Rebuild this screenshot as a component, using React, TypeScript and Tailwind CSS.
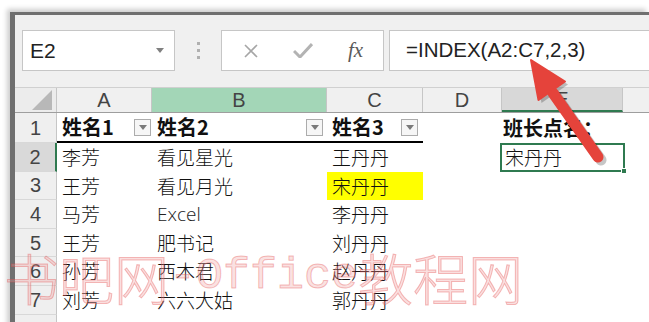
import React from 'react';

const cjk = "font-['Noto_Sans_CJK_SC',sans-serif]";
const latin = "font-['Liberation_Sans','Noto_Sans_CJK_SC',sans-serif]";

interface RowData {
  n: number;
  a: string;
  b: string;
  c: string;
  e?: string;
}

const rows: RowData[] = [
  { n: 2, a: '李芳', b: '看见星光', c: '王丹丹', e: '宋丹丹' },
  { n: 3, a: '王芳', b: '看见月光', c: '宋丹丹' },
  { n: 4, a: '马芳', b: 'Excel', c: '李丹丹' },
  { n: 5, a: '王芳', b: '肥书记', c: '刘丹丹' },
  { n: 6, a: '孙芳', b: '西木君', c: '赵丹丹' },
  { n: 7, a: '刘芳', b: '六六大姑', c: '郭丹丹' },
];

const FilterButton = () => (
  <div className="w-[17px] h-[17px] border border-[#acacac] bg-[#f6f6f6] flex items-center justify-center">
    <svg width="8" height="5" viewBox="0 0 8 5">
      <path d="M0 0 L8 0 L4 5 Z" fill="#7a7a7a" />
    </svg>
  </div>
);

export default function App() {
  return (
    <div className="relative w-[649px] h-[322px] overflow-hidden bg-white">
      <div className="pt-[12px] pl-[10px]">
        {/* Window */}
        <div className="border-t-[3px] border-l-[5px] border-[#6f6f6f] shadow-[-3px_-3px_5px_rgba(0,0,0,0.2)]">
          {/* Formula bar */}
          <div className="h-[72px] bg-[#f0f0f0] flex items-start pt-[15px]">
            <div className="ml-[7px] w-[153px] h-[41px] bg-white border border-[#c6c6c6] flex items-center justify-between pl-[7px] pr-[10px]">
              <span className={`${latin} text-[21px] text-[#222]`}>E2</span>
              <svg width="8" height="5" viewBox="0 0 8 5">
                <path d="M0 0 L8 0 L4 5 Z" fill="#808080" />
              </svg>
            </div>
            <div className="w-[46px] h-[41px] flex items-center justify-center">
              <div className="h-[17px] border-l-[3px] border-dotted border-[#b0b0b0]" />
            </div>
            <div className="w-[163px] h-[41px] bg-white border border-[#c6c6c6] flex items-center">
              <svg className="ml-[22px]" width="14" height="14" viewBox="0 0 14 14">
                <path d="M1 1 L13 13 M13 1 L1 13" stroke="#a6a6a6" strokeWidth="1.6" fill="none" />
              </svg>
              <svg className="ml-[35px]" width="20" height="15" viewBox="0 0 20 15">
                <path d="M1 8 L7 14 L19 1" stroke="#b3b3b3" strokeWidth="3" fill="none" />
              </svg>
              <span className="ml-[35px] font-['Liberation_Serif',serif] italic text-[21px] text-[#5a5a5a]">fx</span>
            </div>
            <div className="ml-[5px] flex-1 h-[41px] bg-white border border-[#c6c6c6] border-r-0 flex items-center pl-[16px]">
              <span className={`${latin} text-[20.5px] text-[#222] whitespace-nowrap`}>=INDEX(A2:C7,2,3)</span>
            </div>
          </div>

          {/* Column headers */}
          <div className={`flex h-[26px] border-t border-[#d0d0d0] border-b border-b-[#9e9e9e] ${latin} text-[20px] text-[#444]`}>
            <div className="w-[42px] bg-[#ececec] border-r border-[#c6c6c6] flex items-end justify-end pr-[4px] pb-[2px]">
              <svg width="20" height="20" viewBox="0 0 20 20">
                <path d="M20 0 L20 20 L0 20 Z" fill="#b8b8b8" />
              </svg>
            </div>
            <div className="w-[95px] bg-[#f0f0f0] border-r border-[#c6c6c6] flex items-center justify-center">A</div>
            <div className="w-[175px] bg-[#a3d6b7] border-r border-[#c6c6c6] flex items-center justify-center">B</div>
            <div className="w-[96px] bg-[#f0f0f0] border-r border-[#c6c6c6] flex items-center justify-center">C</div>
            <div className="w-[79px] bg-[#f0f0f0] border-r border-[#c6c6c6] flex items-center justify-center">D</div>
            <div className="w-[121px] bg-[#d8d8d8] border-r border-[#c6c6c6] border-b-2 border-b-[#2f7a50] flex items-center justify-center">E</div>
            <div className="flex-1 bg-[#f0f0f0]" />
          </div>

          {/* Row 1 */}
          <div className="flex h-[30px]">
            <div className={`w-[42px] bg-[#efefef] border-r border-[#c6c6c6] border-b border-b-[#d8d8d8] flex items-center justify-center ${latin} text-[20px] text-[#444]`}>1</div>
            <div className="w-[366px] flex border-b-2 border-black">
              <div className={`w-[95px] flex items-center justify-between pl-[5px] pr-[1px] ${cjk} font-bold text-[20px] text-[#111]`}>
                <span>姓名1</span>
                <FilterButton />
              </div>
              <div className={`w-[175px] flex items-center justify-between pl-[5px] pr-[4px] ${cjk} font-bold text-[20px] text-[#111]`}>
                <span>姓名2</span>
                <FilterButton />
              </div>
              <div className={`w-[96px] flex items-center justify-between pl-[5px] pr-[5px] ${cjk} font-bold text-[20px] text-[#111]`}>
                <span>姓名3</span>
                <FilterButton />
              </div>
            </div>
            <div className="w-[79px]" />
            <div className={`w-[121px] flex items-center pl-[1px] ${cjk} font-bold text-[20px] text-[#111]`}>班长点名：</div>
          </div>

          {/* Data rows */}
          {rows.map((r) => (
            <div key={r.n} className="flex h-[28.6px]">
              <div
                className={`w-[42px] border-r border-b border-b-[#d8d8d8] flex items-center justify-center ${latin} text-[20px] text-[#444] ${
                  r.n === 2 ? 'bg-[#d9d9d9] border-r-2 border-r-[#2f7a50]' : 'bg-[#efefef] border-r-[#c6c6c6]'
                }`}
              >
                {r.n}
              </div>
              <div className={`w-[95px] flex items-center pl-[5px] ${cjk} font-light text-[19px] text-[#111]`}>{r.a}</div>
              <div className={`w-[175px] flex items-center pl-[5px] ${r.b === 'Excel' ? "font-['Open_Sans',sans-serif] text-[19px] text-[#222]" : cjk + ' text-[19px] text-[#111]'} font-light`}>{r.b}</div>
              <div className={`w-[96px] flex items-center pl-[5px] ${cjk} font-light text-[19px] text-[#111] ${r.n === 3 ? 'bg-[#ffff00]' : ''}`}>{r.c}</div>
              <div className="w-[77px]" />
              {r.e ? (
                <div className={`relative w-[125px] border-2 border-[#2f7a50] flex items-center pl-[3px] ${cjk} font-light text-[19px] text-[#111]`}>
                  {r.e}
                  <div className="absolute -right-[4px] -bottom-[4px] w-[6px] h-[6px] bg-[#2f7a50] border border-white" />
                </div>
              ) : (
                <div className="w-[125px]" />
              )}
            </div>
          ))}

          {/* Row 8 */}
          <div className="flex h-[28px]">
            <div className={`w-[42px] bg-[#efefef] border-r border-[#c6c6c6] flex items-center justify-center ${latin} text-[20px] text-[#444]`}>8</div>
          </div>
        </div>
      </div>

      {/* Watermark */}
      <div className="absolute left-[4px] top-[249px] pointer-events-none whitespace-nowrap flex items-center leading-none text-[rgba(240,150,150,0.3)] [-webkit-text-stroke:1px_rgba(225,70,70,0.35)]">
        <span className={`${cjk} font-light text-[55px]`}>书吧网</span>
        <span className="font-['Liberation_Mono',monospace] text-[45px]">-Office</span>
        <span className={`${cjk} font-light text-[55px]`}>教程网</span>
      </div>

      {/* Red arrow */}
      <svg className="absolute left-0 top-0 pointer-events-none" width="649" height="322" viewBox="0 0 649 322">
        <g opacity="0.22" transform="translate(3 3)">
          <line x1="598" y1="157" x2="553" y2="93" stroke="#000" strokeWidth="11" strokeLinecap="round" />
          <path d="M531 60 L565 81.5 L538.5 100 Z" fill="#000" />
        </g>
        <line x1="598" y1="157" x2="553" y2="93" stroke="#e5433b" strokeWidth="11" strokeLinecap="round" />
        <path d="M531 60 L565 81.5 L538.5 100 Z" fill="#e5433b" stroke="#e5433b" strokeWidth="2" strokeLinejoin="round" />
      </svg>
    </div>
  );
}
